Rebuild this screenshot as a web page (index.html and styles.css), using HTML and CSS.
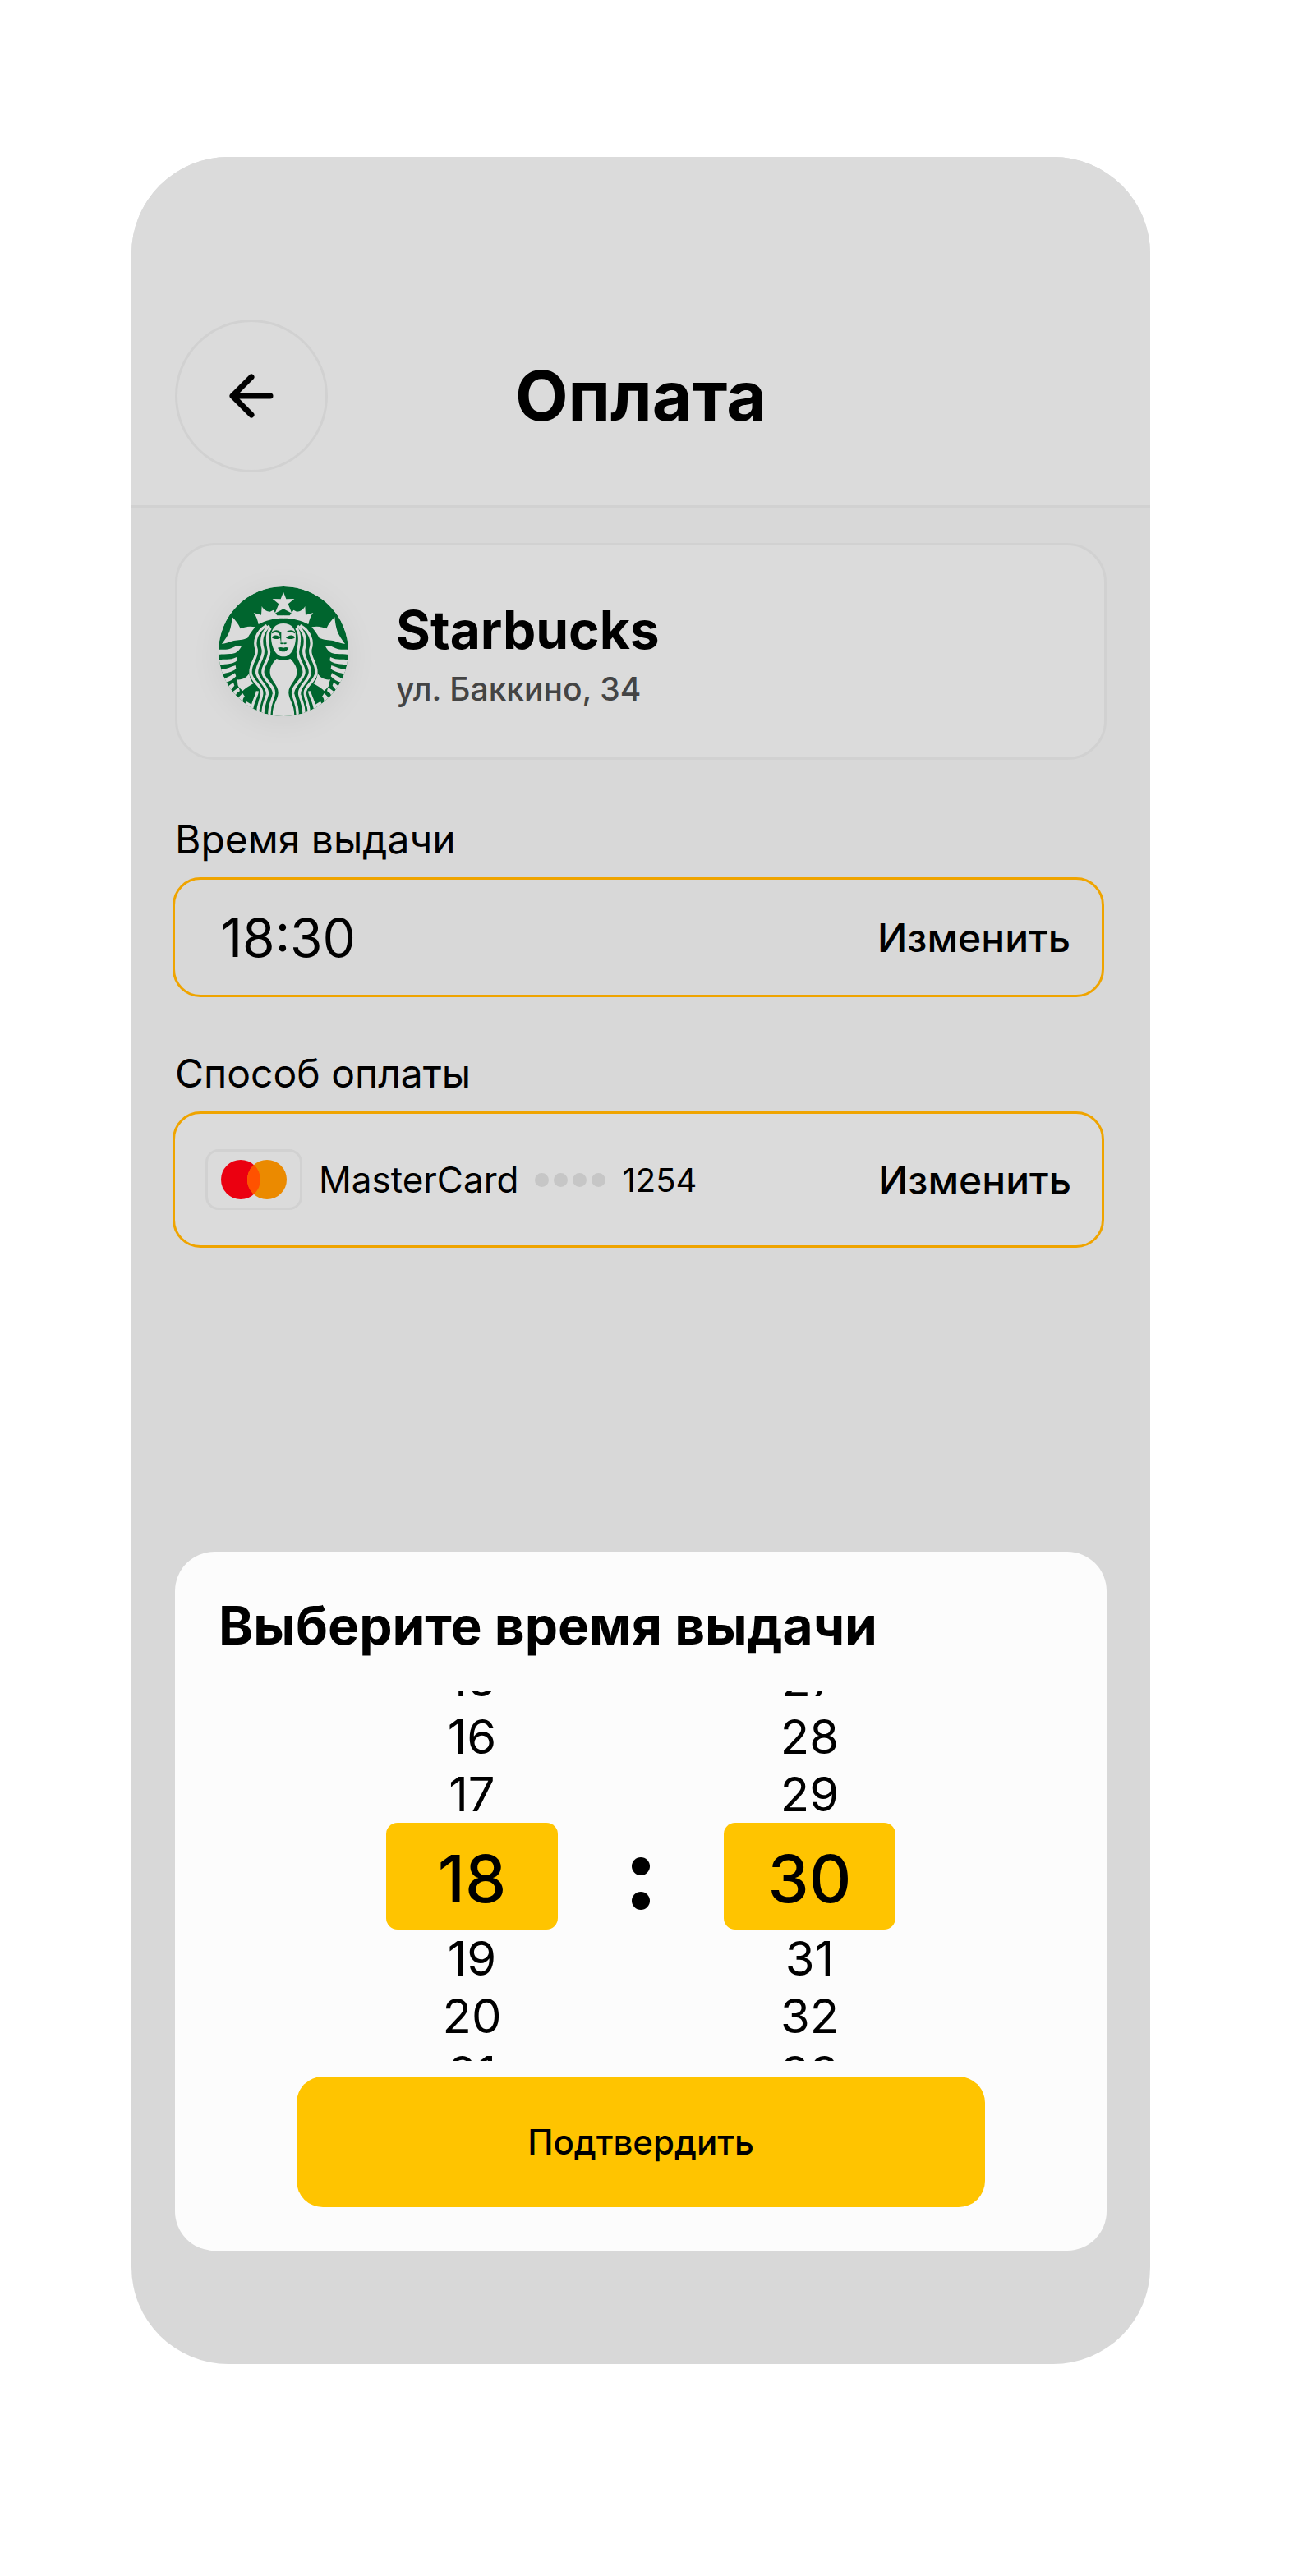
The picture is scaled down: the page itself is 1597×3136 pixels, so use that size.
FILE: index.html
```
<!DOCTYPE html>
<html lang="ru">
<head>
<meta charset="utf-8">
<meta name="viewport" content="width=device-width, initial-scale=1">
<title>Оплата</title>
<link rel="stylesheet" href="styles.css">
</head>
<body>
<main class="phone">
  <header class="header">
    <button class="back" type="button" aria-label="Назад">
      <svg width="54" height="54" viewBox="0 0 54 54" fill="none" stroke="#000" stroke-width="7" stroke-linecap="round" stroke-linejoin="round" aria-hidden="true">
        <path d="M50 27H4M27 4L4 27L27 50"/>
      </svg>
    </button>
    <h1 class="title">Оплата</h1>
  </header>

  <div class="content">
    <section class="shop">
      <svg class="logo" viewBox="50 42 474 474" role="img" aria-label="Starbucks">
        <defs>
          <clipPath id="disc"><circle cx="287" cy="279" r="237"/></clipPath>
          <g id="side">
            <path class="light" d="M100 154C112 166 124 180 130 196C148 188 166 186 184 190C172 204 164 216 156 230C138 238 122 236 106 240C92 244 78 250 62 252C74 234 84 222 90 206C96 188 98 172 100 154Z"/>
            <path class="light" d="M46 274C60 270 80 276 96 268C108 262 120 254 134 260C124 280 110 288 92 288C76 290 62 288 46 292Z"/>
            <path class="light" d="M48 312C68 304 90 314 116 300L118 312C106 326 80 324 52 330Z"/>
            <path class="light" d="M56 346C78 344 94 336 112 330L114 342C102 354 82 358 60 362Z"/>
            <path class="light" d="M66 380C84 374 98 366 110 358L114 370C104 382 90 390 72 394Z"/>
            <path class="light" d="M116 382C136 384 154 376 162 358C164 378 170 390 178 396C160 406 146 414 138 424C128 412 118 408 120 394Z"/>
            <path class="light" d="M78 412L104 392L108 404L90 426Z"/>
            <path class="light" d="M94 432L124 410L128 424C118 428 112 436 112 446Z"/>
            <path class="light" d="M116 454L138 432L146 444C138 450 136 462 144 476Z"/>
            <path class="light" d="M142 478L152 462L172 474L172 492Z"/>
            <g class="strand">
              <path d="M226 184C190 204 178 242 188 270C196 300 160 326 168 362C174 392 212 406 208 436C206 456 194 470 192 510"/>
              <path d="M236 186C206 210 204 244 212 270C220 302 186 328 190 358C194 388 232 406 228 436C224 458 210 474 212 514"/>
              <path d="M240 194C222 216 228 250 234 276C240 306 208 330 212 358C216 386 256 404 252 434C248 458 232 476 236 520"/>
              <path d="M192 424C190 444 174 460 170 500"/>
            </g>
            <path class="light" d="M178 138L206 146L208 114C216 128 226 134 238 134L250 128L264 148H288V158C252 158 220 166 196 180C192 164 188 150 178 138Z"/>
          </g>
        </defs>
        <g clip-path="url(#disc)">
          <rect class="green" x="50" y="42" width="474" height="474"/>
          <use href="#side"/>
          <use href="#side" transform="translate(574 0) scale(-1 1)"/>
          <path class="light" d="M287 62L297 88L327 87L304 106L318 140L287 124L256 140L270 106L247 87L277 88Z"/>
          <path class="light" d="M262 306Q287 318 312 306C322 316 338 334 336 358C334 386 304 404 306 432C308 458 330 476 326 520H248C244 476 266 458 268 432C270 404 240 386 238 358C236 334 252 316 262 306Z"/>
          <path class="light" d="M287 177C314 177 332 194 332 224C332 262 316 298 287 298C258 298 242 262 242 224C242 194 260 177 287 177Z"/>
          <path class="green" d="M245 208C256 198 270 200 279 210V248C274 232 276 218 268 212C260 208 252 210 245 214Z"/>
          <path class="green" d="M246 226C256 216 270 220 276 230C266 236 254 234 246 230Z"/>
          <path class="green" d="M329 208C320 200 308 200 297 208C306 208 318 208 329 214ZM328 226C318 216 304 220 296 230C308 236 320 234 328 230Z"/>
          <path class="green" d="M274 248Q280 256 287 250Q293 256 300 248Q294 246 287 248Q280 246 274 248Z"/>
          <path class="green" d="M266 266Q278 262 287 266Q296 262 306 266Q298 280 287 280Q274 280 266 266Z"/>
        </g>
        <path class="green" d="M448 488H472L466 494H454Z"/>
      </svg>
      <div>
        <h2 class="shop-name">Starbucks</h2>
        <p class="shop-address">ул. Баккино, 34</p>
      </div>
    </section>

    <section class="field">
      <label class="label" for="time">Время выдачи</label>
      <div class="box">
        <input class="time" id="time" type="text" value="18:30" readonly>
        <button class="change" type="button">Изменить</button>
      </div>
    </section>

    <section class="field">
      <h2 class="label">Способ оплаты</h2>
      <div class="box box-card">
        <span class="chip">
          <svg width="80" height="48" viewBox="0 0 80 48" aria-hidden="true">
            <circle cx="24" cy="24" r="24" fill="#eb0010"/>
            <circle cx="56" cy="24" r="24" fill="#eb8a00"/>
            <path d="M40 6.100A24 24 0 0 1 40 41.900A24 24 0 0 1 40 6.100Z" fill="#ff5200"/>
          </svg>
        </span>
        <span>MasterCard</span>
        <span class="dots" aria-hidden="true"><i></i><i></i><i></i><i></i></span>
        <span class="digits">1254</span>
        <button class="change" type="button">Изменить</button>
      </div>
    </section>

    <section class="sheet" aria-labelledby="sheet-title">
      <h2 class="sheet-title" id="sheet-title">Выберите время выдачи</h2>
      <div class="picker">
        <ul class="wheel" role="listbox" aria-label="Часы">
          <li role="option">15</li>
          <li role="option">16</li>
          <li role="option">17</li>
          <li class="selected" role="option" aria-selected="true">18</li>
          <li role="option">19</li>
          <li role="option">20</li>
          <li role="option">21</li>
        </ul>
        <span class="colon" aria-hidden="true"><i></i><i></i></span>
        <ul class="wheel" role="listbox" aria-label="Минуты">
          <li role="option">27</li>
          <li role="option">28</li>
          <li role="option">29</li>
          <li class="selected" role="option" aria-selected="true">30</li>
          <li role="option">31</li>
          <li role="option">32</li>
          <li role="option">33</li>
        </ul>
      </div>
      <button class="confirm" type="button">Подтвердить</button>
    </section>
  </div>
</main>
</body>
</html>
```
FILE: styles.css
```
* {
  box-sizing: border-box;
}

body {
  margin: 0;
  padding: 191px 197px 258px 160px;
  background: #fff;
  color: #000;
  font-family: Inter, "Liberation Sans", sans-serif;
  font-size: 48px;
}

h1,
h2,
p,
ul {
  margin: 0;
  padding: 0;
}

button,
input {
  border: 0;
  padding: 0;
  background: none;
  color: inherit;
  font: inherit;
}

.phone {
  overflow: hidden;
  border-radius: 118px;
  background: #d8d8d8;
}

.header {
  display: grid;
  grid-template-columns: 186px 1fr 186px;
  align-items: center;
  padding: 198px 53px 40px;
  border-bottom: 3px solid #d1d1d1;
  background: #dbdbdb;
}

.back {
  display: flex;
  align-items: center;
  justify-content: center;
  height: 186px;
  border: 3px solid #d1d1d1;
  border-radius: 50%;
}

.title {
  font-size: 84px;
  font-weight: 700;
  line-height: 100px;
  text-align: center;
}

.content {
  padding: 43px 53px 138px;
}

.shop {
  display: flex;
  align-items: center;
  gap: 58px;
  height: 264px;
  padding: 0 50px;
  border: 3px solid #d1d1d1;
  border-radius: 48px;
  background: #dbdbdb;
}

.logo {
  flex: none;
  width: 158px;
  height: 158px;
  border-radius: 50%;
  box-shadow: 0 6px 40px rgba(0, 0, 0, 0.06);
}

.green {
  fill: #00652e;
}

.light {
  fill: #dbdbdb;
}

.strand {
  fill: none;
  stroke: #dbdbdb;
  stroke-width: 10;
}

.shop-name {
  font-size: 64px;
  font-weight: 700;
  line-height: 92px;
}

.shop-address {
  color: #444;
  font-size: 39px;
  font-weight: 500;
  line-height: 52px;
}

.field {
  margin: 67px 3px 0 -3px;
}

.field + .field {
  margin-top: 63px;
}

.label {
  display: block;
  margin-bottom: 16px;
  padding-left: 3px;
  font-size: 48px;
  font-weight: 400;
  line-height: 60px;
}

.box {
  display: flex;
  align-items: center;
  height: 146px;
  padding: 0 38px 0 56px;
  border: 3px solid #efa400;
  border-radius: 34px;
}

.box-card {
  gap: 20px;
  height: 166px;
  padding: 0 37px;
  background: #dbdbdb;
  font-size: 44px;
}

.time {
  flex: 1;
  min-width: 0;
  font-size: 64px;
}

.change {
  margin-left: auto;
  font-size: 48px;
  font-weight: 500;
}

.chip {
  display: flex;
  align-items: center;
  justify-content: center;
  width: 118px;
  height: 74px;
  border: 3px solid #d1d1d1;
  border-radius: 16px;
}

.dots {
  display: flex;
  gap: 6px;
}

.dots i {
  width: 17px;
  height: 17px;
  border-radius: 50%;
  background: #c6c6c6;
}

.digits {
  font-size: 40px;
}

.sheet {
  margin-top: 370px;
  padding: 50px 53px 53px;
  border-radius: 48px;
  background: #fcfcfc;
}

.sheet-title {
  font-size: 64px;
  font-weight: 700;
  line-height: 80px;
}

.picker {
  display: flex;
  align-items: center;
  justify-content: center;
  gap: 90px;
  height: 450px;
  margin-top: 40px;
  overflow: hidden;
}

.wheel {
  width: 209px;
  list-style: none;
  font-size: 58px;
  line-height: 70px;
  text-align: center;
}

.selected {
  padding-top: 6px;
  border-radius: 14px;
  background: #ffc400;
  font-size: 80px;
  font-weight: 500;
  line-height: 124px;
}

.colon {
  display: grid;
  gap: 20px;
  padding-top: 18px;
}

.colon i {
  width: 22px;
  height: 22px;
  border-radius: 50%;
  background: #000;
}

.confirm {
  display: block;
  width: calc(100% - 190px);
  height: 159px;
  margin: 19px auto 0;
  border-radius: 32px;
  background: #ffc400;
  font-size: 42px;
  font-weight: 500;
}
```
